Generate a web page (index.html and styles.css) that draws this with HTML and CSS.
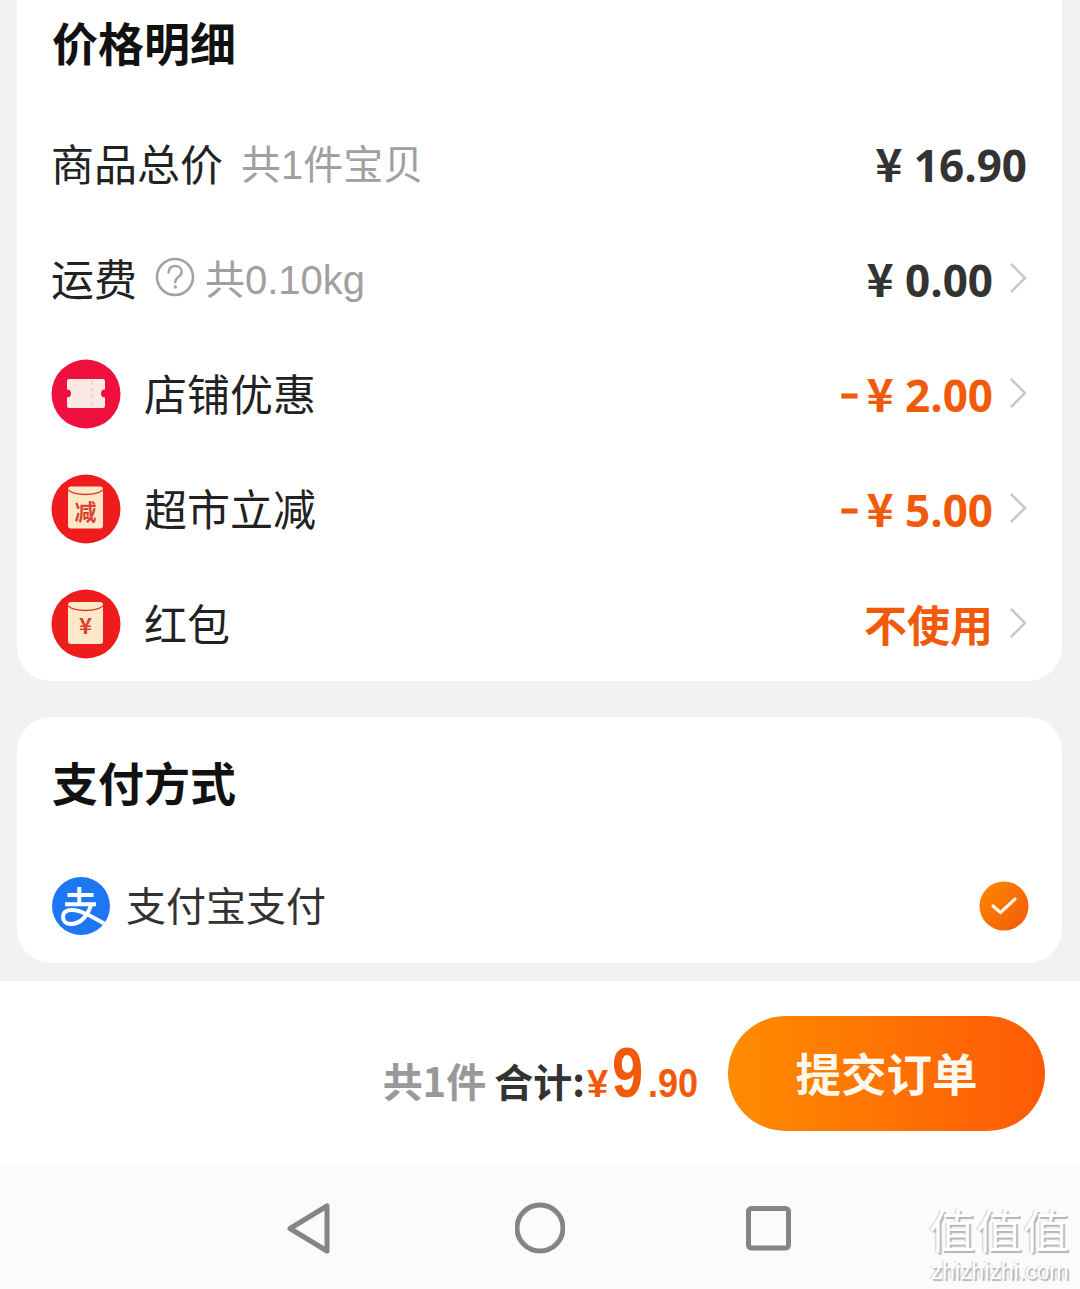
FILE: index.html
```html
<!DOCTYPE html>
<html lang="zh-CN">
<head>
    <meta charset="UTF-8">
    <meta name="viewport" content="width=device-width, initial-scale=1.0">
    <title>确认订单</title>
    <link rel="stylesheet" href="styles.css">
</head>
<body>
    <div class="page">
        <!-- 价格明细 -->
        <section class="card price-card">
            <h2 class="card-title">价格明细</h2>

            <div class="row">
                <span class="row-label">商品总价</span>
                <span class="row-note note-goods">共1件宝贝</span>
                <span class="amount amount-plain"><span class="yen">¥</span> 16.90</span>
            </div>

            <div class="row">
                <span class="row-label">运费</span>
                <svg class="help-icon" viewBox="0 0 40 40">
                    <circle cx="20" cy="20" r="18" fill="none" stroke="#a3a3a3" stroke-width="2.6"/>
                    <path d="M13.5 15.5c0-4 3-6.500 6.700-6.500 3.800 0 6.500 2.500 6.500 5.800 0 2.800-1.700 4-3.600 5.400-1.900 1.400-2.800 2.500-2.800 5" fill="none" stroke="#a3a3a3" stroke-width="2.400" stroke-linecap="round"/>
                    <circle cx="20.300" cy="30" r="1.700" fill="#a3a3a3"/>
                </svg>
                <span class="row-note">共0.10kg</span>
                <span class="amount amount-plain"><span class="yen">¥</span> 0.00</span>
                <svg class="chevron" viewBox="0 0 18 32"><path d="M2 2l14 14L2 30" /></svg>
            </div>

            <div class="row">
                <svg class="row-icon" viewBox="0 0 70 70">
                    <circle cx="35" cy="35" r="34.500" fill="#f0103f"/>
                    <path d="M18 20h34a2 2 0 0 1 2 2v8.500a4 4 0 0 0 0 8V47a2 2 0 0 1-2 2H18a2 2 0 0 1-2-2v-8.500a4 4 0 0 0 0-8V22a2 2 0 0 1 2-2z" fill="#fbe9e6"/>
                    <path d="M41 22v25" stroke="#f3c3c0" stroke-width="1.500" stroke-dasharray="3 4"/>
                </svg>
                <span class="row-label">店铺优惠</span>
                <span class="amount amount-sale"><span class="dash">–</span><span class="yen">¥</span> 2.00</span>
                <svg class="chevron" viewBox="0 0 18 32"><path d="M2 2l14 14L2 30" /></svg>
            </div>

            <div class="row">
                <svg class="row-icon" viewBox="0 0 70 70">
                    <circle cx="35" cy="35" r="34.500" fill="#ee1c1c"/>
                    <rect x="17" y="12.500" width="35" height="42" rx="3" fill="#fde8c8"/>
                    <path d="M17 16c8 6 27 6 35 0" fill="none" stroke="#d83a2c" stroke-width="1.500"/>
                    <text class="packet-text" x="34.500" y="46" font-size="22">减</text>
                </svg>
                <span class="row-label">超市立减</span>
                <span class="amount amount-sale"><span class="dash">–</span><span class="yen">¥</span> 5.00</span>
                <svg class="chevron" viewBox="0 0 18 32"><path d="M2 2l14 14L2 30" /></svg>
            </div>

            <div class="row">
                <svg class="row-icon" viewBox="0 0 70 70">
                    <circle cx="35" cy="35" r="34.500" fill="#ee1c1c"/>
                    <rect x="17" y="13" width="35" height="42" rx="3" fill="#fde8c8"/>
                    <path d="M17 17c8 6 27 6 35 0" fill="none" stroke="#d83a2c" stroke-width="1.500"/>
                    <text class="packet-text" x="34.500" y="45" font-size="22">¥</text>
                </svg>
                <span class="row-label">红包</span>
                <span class="amount amount-sale amount-text">不使用</span>
                <svg class="chevron" viewBox="0 0 18 32"><path d="M2 2l14 14L2 30" /></svg>
            </div>
        </section>

        <!-- 支付方式 -->
        <section class="card pay-card">
            <h2 class="card-title">支付方式</h2>
            <div class="pay-row">
                <svg class="alipay-icon" viewBox="0 0 58 58">
                    <defs>
                        <clipPath id="alipayClip"><circle cx="29" cy="29" r="29"/></clipPath>
                    </defs>
                    <circle cx="29" cy="29" r="29" fill="#1d77f2"/>
                    <g fill="none" stroke="#fff" stroke-width="4" clip-path="url(#alipayClip)">
                        <path d="M15.500 18h26M27.300 10v17M13 27.300h31"/>
                        <path d="M39 28C36 38 29 47 19 47 13 47 11 43 11 40 11 35 15 33 20 33 30 33 44 42 60 51"/>
                    </g>
                </svg>
                <span class="pay-name">支付宝支付</span>
                <svg class="check-icon" viewBox="0 0 50 50">
                    <defs>
                        <linearGradient id="checkFill" x1="0" y1="0" x2="1" y2="1">
                            <stop offset="0" stop-color="#ff8a00"/>
                            <stop offset="1" stop-color="#f2580c"/>
                        </linearGradient>
                    </defs>
                    <circle cx="25" cy="25" r="24.500" fill="url(#checkFill)"/>
                    <path d="M14 25l7.500 6.500L36 18" fill="none" stroke="#fff3e4" stroke-width="3.200" stroke-linecap="round" stroke-linejoin="round"/>
                </svg>
            </div>
        </section>

        <!-- 底部结算栏 -->
        <footer class="checkout">
            <div class="summary">
                <span class="summary-count">共1件</span>
                <span class="summary-label">合计:</span>
                <span class="summary-price"><span class="price-yen">¥</span><span class="price-int">9</span><span class="price-dec">.90</span></span>
            </div>
            <button class="submit-btn" type="button">提交订单</button>
        </footer>

        <!-- 系统导航栏 -->
        <nav class="system-nav">
            <svg class="nav-icon" viewBox="0 0 50 54"><path d="M42 5v45L5 27.500z"/></svg>
            <svg class="nav-icon" viewBox="0 0 50 54"><circle cx="25" cy="27" r="23"/></svg>
            <svg class="nav-icon" viewBox="0 0 50 54"><rect x="3.500" y="7.500" width="40" height="39.500" rx="3"/></svg>
        </nav>

        <!-- 水印 -->
        <div class="watermark">
            <div class="watermark-mark">值值值</div>
            <div class="watermark-url">zhizhizhi.com</div>
        </div>
    </div>
</body>
</html>
```

FILE: styles.css
```css
/* 基础 */
* {
    box-sizing: border-box;
}

body {
    margin: 0;
    padding: 0;
    background-color: #f2f2f2;
    font-family: "Noto Sans CJK SC", "Noto Sans", sans-serif;
    color: #222;
}

.page {
    position: relative;
    width: 1080px;
    height: 1289px;
    overflow: hidden;
    display: flex;
    flex-direction: column;
}

/* 卡片 */
.card {
    background-color: #fff;
    border-radius: 34px;
    margin: 0 18px 0 17px;
    padding: 0 35px;
}

.price-card {
    margin-top: -30px;
    height: 711px;
    padding-top: 41px;
}

.pay-card {
    margin-top: 36px;
    height: 246px;
    padding-top: 34px;
}

.card-title {
    margin: 0;
    height: 60px;
    line-height: 60px;
    font-size: 46px;
    font-weight: 700;
    color: #111;
}

.price-card .card-title {
    margin-bottom: 35px;
}

/* 价格行 */
.row {
    display: flex;
    align-items: center;
    height: 115px;
    margin-left: -1px;
}

.row-label {
    font-size: 43px;
    color: #222;
    padding-bottom: 4px;
}

.row-icon {
    width: 70px;
    height: 70px;
    margin-right: 23px;
    flex-shrink: 0;
}

.row-note {
    font-family: "Liberation Sans", "Noto Sans CJK SC", sans-serif;
    font-size: 40px;
    color: #a0a0a0;
    padding-bottom: 4px;
}

.note-goods {
    margin-left: 18px;
}

.help-icon {
    width: 40px;
    height: 40px;
    margin-left: 18px;
    margin-right: 10px;
    margin-bottom: 4px;
}

.amount {
    margin-left: auto;
    font-family: "Open Sans", "Noto Sans CJK SC", sans-serif;
    font-size: 44px;
    font-weight: 700;
    white-space: pre;
    padding-bottom: 4px;
}

.amount-plain {
    color: #333;
}

.amount-sale {
    color: #f05a0a;
}

.amount-text {
    font-size: 43px;
    padding: 0;
}

.yen {
    font-family: "Noto Sans CJK SC", sans-serif;
    font-size: 46px;
}

.dash {
    font-size: 36px;
    margin-right: 8px;
    vertical-align: 6px;
    -webkit-text-stroke: 1px #f05a0a;
}

.chevron {
    width: 18px;
    height: 32px;
    margin-left: 16px;
    margin-bottom: 2px;
    fill: none;
    stroke: #c8c8c8;
    stroke-width: 2.500;
}

.packet-text {
    font-family: "Noto Sans CJK SC", sans-serif;
    font-weight: 700;
    fill: #d8422f;
    text-anchor: middle;
}

/* 支付方式 */
.pay-row {
    display: flex;
    align-items: center;
    height: 58px;
    margin-top: 66px;
}

.alipay-icon {
    width: 58px;
    height: 58px;
}

.pay-name {
    margin-left: 16px;
    font-size: 40px;
    color: #333;
    padding-bottom: 4px;
}

.check-icon {
    width: 50px;
    height: 50px;
    margin-left: auto;
    margin-right: -2px;
}

/* 底部结算栏 */
.checkout {
    margin-top: 18px;
    height: 185px;
    background-color: #fff;
    display: flex;
    align-items: center;
    justify-content: flex-end;
    padding-right: 35px;
}

.summary {
    display: flex;
    align-items: baseline;
    font-weight: 700;
    margin-right: 30px;
}

.summary-count {
    font-size: 40px;
    color: #999;
    margin-right: 8px;
}

.summary-label {
    font-size: 39px;
    color: #333;
}

.summary-price {
    font-family: "Liberation Sans", sans-serif;
    color: #f05a0a;
    margin-left: 2px;
}

.price-yen {
    font-size: 38px;
}

/* 数字比字体本身更窄，横向压缩 */
.price-int,
.price-dec {
    display: inline-block;
    transform-origin: left bottom;
}

.price-int {
    font-size: 70px;
    line-height: 1;
    margin-left: 4px;
    margin-right: -3px;
    transform: scaleX(0.8);
}

.price-dec {
    font-size: 41px;
    margin-right: -7px;
    transform: scaleX(0.88);
}

.submit-btn {
    width: 317px;
    height: 115px;
    border: none;
    border-radius: 58px;
    background: linear-gradient(90deg, #ff8c00, #fe5a06);
    font-family: inherit;
    font-size: 45.500px;
    font-weight: 700;
    color: #fff8ec;
    padding: 0 0 4px;
}

/* 系统导航栏 */
.system-nav {
    height: 123px;
    background-color: #fbfbfb;
    display: flex;
    align-items: center;
    justify-content: center;
    gap: 180px;
}

.nav-icon {
    width: 50px;
    height: 54px;
    fill: none;
    stroke: #858585;
    stroke-width: 5;
    stroke-linejoin: round;
}

/* 水印 */
.watermark {
    position: absolute;
    right: 8px;
    bottom: 5px;
    width: 145px;
    text-align: center;
    color: #fff;
    text-shadow: 2px 2px 1px #b5b5b5, -1px 0 1px #ccc;
}

.watermark-mark {
    font-family: "Liberation Sans", "Noto Sans CJK SC", sans-serif;
    font-size: 46px;
    line-height: 52px;
    letter-spacing: 1px;
}

.watermark-url {
    font-family: "Liberation Sans", sans-serif;
    font-size: 23px;
    line-height: 26px;
}
```
